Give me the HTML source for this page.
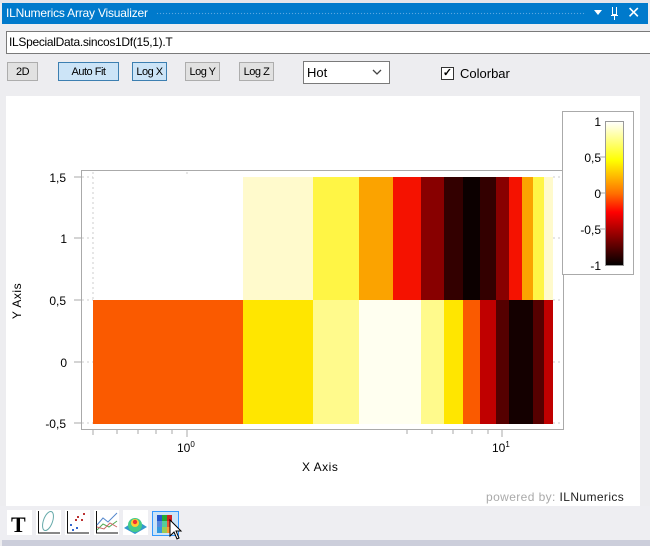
<!DOCTYPE html>
<html><head><meta charset="utf-8"><style>
body{margin:0;width:650px;height:546px;background:#eeeef2;font-family:"Liberation Sans",sans-serif;position:relative;overflow:hidden}
.a{position:absolute}
.btn{position:absolute;top:62px;height:19px;border:1px solid #adadad;background:#e1e1e1;font-size:11px;line-height:19px;text-align:center;box-sizing:border-box;letter-spacing:-0.5px}
.sel{background:#cce4f7;border-color:#3c7fb1}
</style></head><body>
<div class="a" style="left:0;top:0;width:650px;height:546px;background:#ededf0"></div>
<div class="a" style="left:0;top:0;width:650px;height:3px;background:#e5e5ea"></div>
<div class="a" style="left:2px;top:3px;width:646px;height:21px;background:#007acc"></div>
<div class="a" style="left:6px;top:6px;color:#fff;font-size:12px;letter-spacing:-0.2px">ILNumerics Array Visualizer</div>
<div class="a" style="left:156px;top:12px;width:430px;height:3px;background-image:radial-gradient(#5aa6e0 0.7px,transparent 0.8px);background-size:3px 3px"></div>
<div class="a" style="left:594px;top:10px;width:0;height:0;border-left:4px solid transparent;border-right:4px solid transparent;border-top:5px solid #fff"></div>
<div class="a" style="left:612px;top:7px;width:5px;height:8px;border:1px solid #fff;border-top:none;box-sizing:border-box"></div>
<div class="a" style="left:611px;top:15px;width:7px;height:1px;background:#fff"></div>
<div class="a" style="left:614px;top:15px;width:1px;height:5px;background:#fff"></div>
<div class="a" style="left:627px;top:3px;color:#fff;font-size:16px">✕</div>
<div class="a" style="left:6px;top:31px;width:650px;height:23px;background:#fff;border:1px solid #7a7a7a;box-sizing:border-box"></div>
<div class="a" style="left:9px;top:35px;font-size:12px;letter-spacing:-0.3px">ILSpecialData.sincos1Df(15,1).T</div>
<div class="btn" style="left:7px;width:31px">2D</div>
<div class="btn sel" style="left:58px;width:61px">Auto Fit</div>
<div class="btn sel" style="left:132px;width:35px">Log X</div>
<div class="btn" style="left:185px;width:35px">Log Y</div>
<div class="btn" style="left:239px;width:35px">Log Z</div>
<div class="a" style="left:303px;top:61px;width:87px;height:23px;background:#fff;border:1px solid #7a7a7a;box-sizing:border-box;font-size:13px;padding:3px 0 0 3px">Hot</div>
<svg class="a" style="left:372px;top:69px" width="10" height="7"><polyline points="1,1 5,5 9,1" fill="none" stroke="#444" stroke-width="1.3"/></svg>
<div class="a" style="left:441px;top:67px;width:13px;height:13px;border:1px solid #333;box-sizing:border-box;background:#fff;font-size:11px;line-height:11px;text-align:center;font-weight:bold">✓</div>
<div class="a" style="left:460px;top:66px;font-size:13px">Colorbar</div>
<div class="a" style="left:6px;top:96px;width:634px;height:410px;background:#fff"></div>
<svg class="a" style="left:0;top:0" width="650" height="546">
<g shape-rendering="crispEdges">
<rect x="93" y="300" width="150" height="124" fill="#fa5a00"/>
<rect x="243" y="177" width="70" height="123" fill="#fffacc"/><rect x="313" y="177" width="46" height="123" fill="#fff545"/><rect x="359" y="177" width="34" height="123" fill="#fba300"/><rect x="393" y="177" width="28" height="123" fill="#f51200"/><rect x="421" y="177" width="23" height="123" fill="#880000"/><rect x="444" y="177" width="19" height="123" fill="#330000"/><rect x="463" y="177" width="17" height="123" fill="#0c0000"/><rect x="480" y="177" width="16" height="123" fill="#330000"/><rect x="496" y="177" width="13" height="123" fill="#880000"/><rect x="509" y="177" width="13" height="123" fill="#f51200"/><rect x="522" y="177" width="11" height="123" fill="#fba300"/><rect x="533" y="177" width="11" height="123" fill="#fff545"/><rect x="544" y="177" width="9" height="123" fill="#fffacc"/>
<rect x="243" y="300" width="70" height="124" fill="#ffe600"/><rect x="313" y="300" width="46" height="124" fill="#fffa8c"/><rect x="359" y="300" width="62" height="124" fill="#fffff0"/><rect x="421" y="300" width="23" height="124" fill="#fffa8c"/><rect x="444" y="300" width="19" height="124" fill="#ffe600"/><rect x="463" y="300" width="17" height="124" fill="#fa5a00"/><rect x="480" y="300" width="16" height="124" fill="#c00000"/><rect x="496" y="300" width="13" height="124" fill="#550000"/><rect x="509" y="300" width="24" height="124" fill="#140000"/><rect x="533" y="300" width="11" height="124" fill="#550000"/><rect x="544" y="300" width="9" height="124" fill="#c00000"/>
<g stroke="#ccc" stroke-dasharray="2,3"><line x1="82" y1="177" x2="93" y2="177"/><line x1="82" y1="238" x2="93" y2="238"/><line x1="82" y1="300" x2="93" y2="300"/><line x1="82" y1="362" x2="93" y2="362"/><line x1="82" y1="423" x2="93" y2="423"/><line x1="553" y1="177" x2="563" y2="177"/><line x1="553" y1="238" x2="563" y2="238"/><line x1="553" y1="300" x2="563" y2="300"/><line x1="553" y1="362" x2="563" y2="362"/><line x1="553" y1="423" x2="563" y2="423"/><line x1="93" y1="172" x2="93" y2="300"/><line x1="187" y1="172" x2="187" y2="177"/></g>
<rect x="81.5" y="170.5" width="482" height="259" fill="none" stroke="#aaa"/>
<g stroke="#aaa"><line x1="74" y1="177" x2="81" y2="177"/><line x1="74" y1="238" x2="81" y2="238"/><line x1="74" y1="300" x2="81" y2="300"/><line x1="74" y1="362" x2="81" y2="362"/><line x1="74" y1="423" x2="81" y2="423"/>
<line x1="93" y1="430" x2="93" y2="435"/><line x1="117" y1="430" x2="117" y2="434"/><line x1="138" y1="430" x2="138" y2="434"/><line x1="156" y1="430" x2="156" y2="434"/><line x1="172" y1="430" x2="172" y2="434"/><line x1="187" y1="430" x2="187" y2="437"/>
<line x1="407" y1="430" x2="407" y2="434"/><line x1="432" y1="430" x2="432" y2="434"/><line x1="453" y1="430" x2="453" y2="434"/><line x1="472" y1="430" x2="472" y2="434"/><line x1="488" y1="430" x2="488" y2="434"/><line x1="502" y1="430" x2="502" y2="437"/></g>
<rect x="562.5" y="111.5" width="71" height="163" fill="#fff" stroke="#aaa"/>
</g>
<defs><linearGradient id="h" x1="0" y1="1" x2="0" y2="0"><stop offset="0" stop-color="#000"/><stop offset="0.37" stop-color="#ff0000"/><stop offset="0.5" stop-color="#ff7000"/><stop offset="0.73" stop-color="#ffff00"/><stop offset="1" stop-color="#ffffff"/></linearGradient></defs>
<rect x="605.5" y="121.5" width="18" height="144" fill="url(#h)" stroke="#999"/>
<g stroke="#aaa"><line x1="600" y1="157" x2="605" y2="157"/><line x1="600" y1="193" x2="605" y2="193"/><line x1="600" y1="229" x2="605" y2="229"/></g>
<g font-size="12" fill="#000" text-anchor="end" font-family="Liberation Sans"><text x="66" y="182">1,5</text><text x="67" y="243">1</text><text x="66" y="305">0,5</text><text x="67" y="367">0</text><text x="66" y="428">-0,5</text>
<text x="601" y="126">1</text><text x="601" y="162">0,5</text><text x="601" y="198">0</text><text x="601" y="234">-0,5</text><text x="601" y="270">-1</text></g>
<text x="177" y="452" font-size="12">10<tspan font-size="8" dy="-5">0</tspan></text>
<text x="492" y="452" font-size="12">10<tspan font-size="8" dy="-5">1</tspan></text>
<text x="302" y="471" font-size="12" letter-spacing="0.5">X Axis</text>
<text transform="translate(21,301) rotate(-90)" x="0" y="0" font-size="12" letter-spacing="0.5" text-anchor="middle">Y Axis</text>
<text x="486" y="501" font-size="12" fill="#aaa" letter-spacing="0.4">powered by: <tspan fill="#222">ILNumerics</tspan></text>
</svg>
<div class="a" style="left:0;top:506px;width:650px;height:34px;background:#eeeef2"></div>
<div class="a" style="left:2px;top:540px;width:648px;height:6px;background:#cccedb"></div>
<svg class="a" style="left:0;top:506px" width="200" height="34">
<rect x="7" y="4" width="25" height="25" fill="#fff"/>
<text x="11" y="26" font-size="22" font-weight="bold" font-family="Liberation Serif">T</text>
<rect x="36" y="4" width="25" height="25" fill="#fff"/>
<ellipse cx="48" cy="15" rx="4.5" ry="10" transform="rotate(20 48 15)" fill="none" stroke="#6aa"/>
<line x1="38" y1="27" x2="60" y2="27" stroke="#111"/><line x1="38.5" y1="5" x2="38.5" y2="27" stroke="#111"/>
<rect x="65" y="4" width="25" height="25" fill="#fff"/>
<line x1="67" y1="27" x2="89" y2="27" stroke="#111"/><line x1="67.5" y1="5" x2="67.5" y2="27" stroke="#111"/>
<g fill="#b33"><rect x="77" y="10" width="2" height="2"/><rect x="83" y="7" width="2" height="2"/><rect x="81" y="13" width="2" height="2"/><rect x="75" y="13" width="2" height="2"/></g>
<g fill="#36c"><rect x="70" y="18" width="2" height="2"/><rect x="72" y="23" width="2" height="2"/><rect x="76" y="21" width="2" height="2"/></g>
<rect x="94" y="4" width="25" height="25" fill="#fff"/>
<line x1="96" y1="27" x2="118" y2="27" stroke="#111"/><line x1="96.5" y1="5" x2="96.5" y2="27" stroke="#111"/>
<polyline points="97,19 103,12 108,16 117,7" fill="none" stroke="#58c"/><polyline points="97,24 103,18 109,21 117,15" fill="none" stroke="#5a5"/><polyline points="97,21 104,23 110,17 117,21" fill="none" stroke="#c66"/>
<rect x="123" y="4" width="25" height="25" fill="#fff"/>
<polygon points="124,22 135,28 147,21 136,14" fill="#39c"/><circle cx="135" cy="19" r="7" fill="#4c8"/><circle cx="135" cy="17" r="4" fill="#fc3"/><circle cx="135" cy="16" r="2.2" fill="#e33"/>
<rect x="152.5" y="5.5" width="26" height="24" fill="#cce4f7" stroke="#3399ff"/>
<rect x="157" y="9" width="5" height="6" fill="#2255cc"/><rect x="162" y="9" width="5" height="6" fill="#22aa33"/><rect x="167" y="9" width="5" height="6" fill="#cc2222"/>
<rect x="157" y="15" width="5" height="6" fill="#5588dd"/><rect x="162" y="15" width="5" height="6" fill="#55cc99"/><rect x="167" y="15" width="5" height="6" fill="#ee5533"/>
<rect x="157" y="21" width="5" height="6" fill="#3399dd"/><rect x="162" y="21" width="5" height="6" fill="#99cc55"/><rect x="167" y="21" width="5" height="6" fill="#ff9933"/>
<polygon points="170,14 170,30 174,26 177,33 179,32 176,25 181,25" fill="#fff" stroke="#000"/>
</svg>
</body></html>
